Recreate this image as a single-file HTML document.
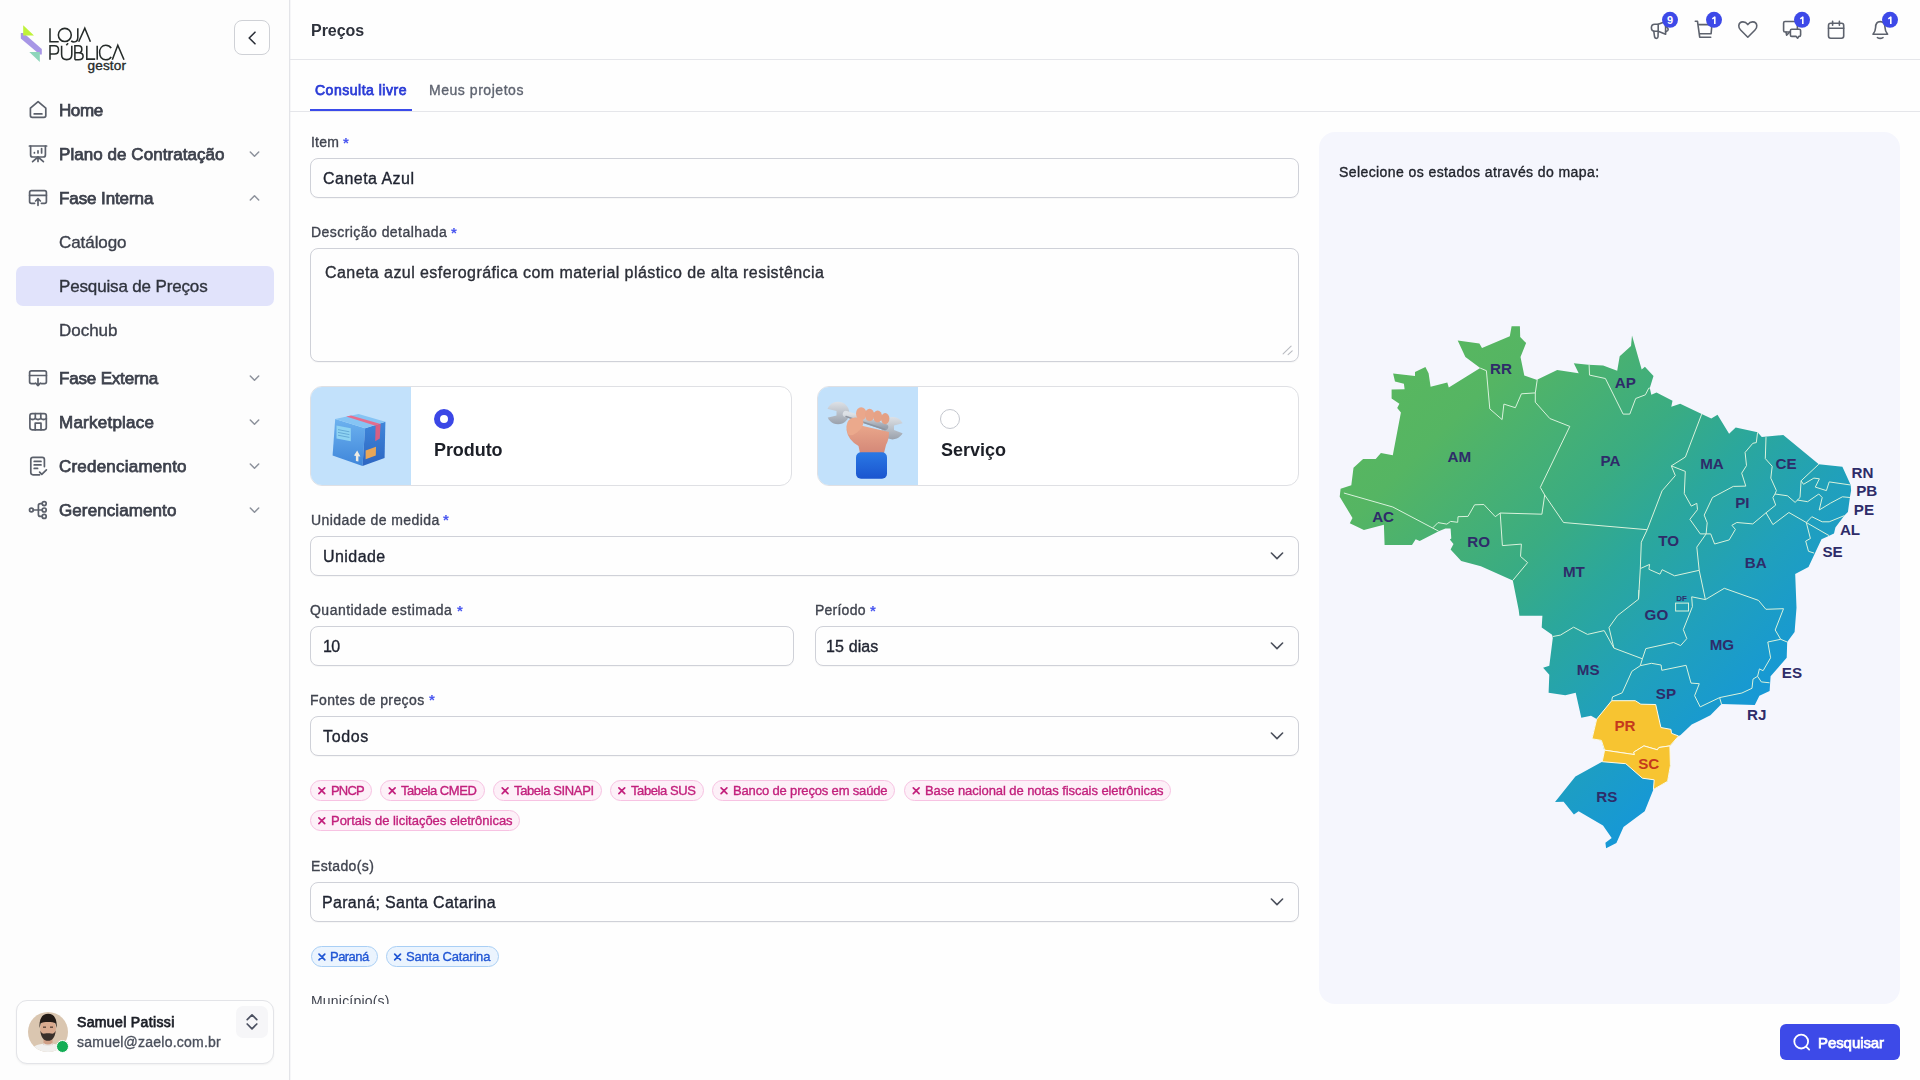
<!DOCTYPE html>
<html lang="pt-BR"><head><meta charset="utf-8"><title>Preços</title>
<style>
*{box-sizing:border-box;margin:0;padding:0}
html,body{width:1920px;height:1080px;overflow:hidden;background:#fefefe;font-family:"Liberation Sans",sans-serif}
.abs{position:absolute}
.t{position:absolute;white-space:pre;line-height:1;font-family:"Liberation Sans",sans-serif;will-change:transform}
.sb{position:absolute;left:0;top:0;width:290px;height:1080px;background:#fdfdfd;border-right:1px solid #e3e4e8;box-shadow:1px 0 0 #f6f6f8}
.inp{position:absolute;background:#fefefe;border:1px solid #cfd1d8;border-radius:8px;box-shadow:0 1px 1px rgba(0,0,0,0.03)}
.card{position:absolute;background:#fff;border:1px solid #dfe0e4;border-radius:12px;overflow:hidden}
.chip{position:absolute;height:21px;border-radius:11px}
.chip.pk{background:#fdf0f8;border:1px solid #f7c2e2}
.chip.bl{background:#ebf4fe;border:1px solid #a9cff5}
.chip .x{position:absolute;left:6px;top:2px;font:700 13px/16px "Liberation Sans",sans-serif}
.chip.pk .x{color:#c2207c}
.chip.bl .x{color:#2156d4}
.ml{font:700 15.2px "Liberation Sans",sans-serif;fill:#2e2c69}
</style></head><body>
<!-- sidebar -->
<div class="sb"></div>
<div class="abs" style="left:16px;top:266px;width:258px;height:40px;background:#e1e3fb;border-radius:7px"></div>
<div class="abs" style="left:234px;top:20px;width:36px;height:35px;border:1px solid #cfd1d6;border-radius:8px;background:#fefefe"></div>
<div class="abs" style="left:16px;top:1000px;width:258px;height:64px;border:1px solid #e3e4e8;border-radius:11px;background:#fefefe;box-shadow:0 1px 2px rgba(0,0,0,0.05)"></div>
<div class="abs" style="left:236px;top:1006px;width:32px;height:32px;border-radius:7px;background:#f6f6f8"></div>
<!-- avatar -->
<svg class="abs" style="left:28px;top:1012px" width="40" height="40" viewBox="0 0 40 40">
<defs><clipPath id="av"><circle cx="20" cy="20" r="20"/></clipPath></defs>
<g clip-path="url(#av)">
<rect width="40" height="40" fill="#dac6b0"/>
<path d="M2 40 C4 33.5 11 31.5 20 31.5 C29 31.5 36 33.5 38 40 Z" fill="#f0efed"/>
<rect x="15.5" y="24" width="9" height="9" fill="#cf9f86"/>
<path d="M15.5 31 Q20 34 24.5 31 L24.5 33 Q20 35 15.5 33 Z" fill="#e4e2df"/>
<ellipse cx="20" cy="16.8" rx="7.9" ry="10.4" fill="#d9aa8f"/>
<path d="M11.6 16 C10.8 6.2 14.6 1.8 20.2 1.8 C25.6 1.8 29.4 6.2 28.6 16 L27.6 11.5 C25 9.6 15.4 9.6 12.6 11.5 Z" fill="#231b17"/>
<path d="M12.4 18.5 C12.6 25.5 16 28.8 20 28.8 C24 28.8 27.4 25.5 27.6 18.5 C26.6 21.4 25 22 23 21.6 C21.5 21.2 18.5 21.2 17 21.6 C15 22 13.4 21.4 12.4 18.5 Z" fill="#3a302b"/>
<rect x="15" y="14.6" width="3" height="1.1" fill="#3a2a22"/><rect x="22" y="14.6" width="3" height="1.1" fill="#3a2a22"/>
</g>
</svg>
<div class="abs" style="left:56.3px;top:1040.3px;width:13px;height:13px;border-radius:50%;background:#13ad55;border:1.4px solid #fff"></div>
<!-- logo -->
<svg class="abs" style="left:0;top:0" width="140" height="80" viewBox="0 0 140 80">
<polygon points="20.8,32.9 23.5,32.9 41.8,48.9 41.8,54.6 39.8,54.6 20.8,38.4" fill="#a796e6"/>
<polygon points="23.2,25.2 23.2,35.6 34,35.6" fill="#bff23a"/>
<polygon points="29.3,52.1 39.8,52.1 39.8,62.1" fill="#8ed6bb"/>
<g fill="none" stroke="#252b29" stroke-width="1.55" stroke-linecap="butt" stroke-linejoin="miter">
<path d="M50 28.2 V41.7 H58.7"/>
<ellipse cx="64.8" cy="34.95" rx="6.45" ry="6.6"/>
<path d="M77.8 28.2 V37.5 C77.8 40.3 76.2 41.9 73.9 41.9 C72.7 41.9 71.8 41.5 71.2 40.9"/>
<path d="M78.7 41.7 L84.8 28.3 L90.4 41.7"/>
<path d="M50 59.7 V45.8 H54.5 C57.3 45.8 58.5 47.6 58.5 49.9 C58.5 52.2 57.3 54 54.5 54 H50"/>
<path d="M61.6 45.8 V54.5 C61.6 58 63.7 59.6 66.7 59.6 C69.7 59.6 71.8 58 71.8 54.5 V45.8"/>
<path d="M66.3 45.3 L68.1 43.3"/>
<path d="M74.9 59.7 V45.8 H78.6 C80.9 45.8 81.8 47.2 81.8 49.2 C81.8 51.2 80.8 52.8 78.6 52.8 H74.9 M78.6 52.8 C81.6 52.8 83.1 54.3 83.1 56.2 C83.1 58.3 81.6 59.7 78.6 59.7 H74.9"/>
<path d="M86.8 45.8 V59.1 H95.2"/>
<path d="M97.2 45.8 V59.7"/>
<path d="M111.2 48.2 C110 46.3 108 45.3 105.8 45.3 C102 45.3 99.6 48.5 99.6 52.6 C99.6 56.7 102 59.8 105.8 59.8 C108 59.8 110 58.8 111.2 56.8"/>
<path d="M112.3 59.7 L117.8 45.3 L124 59.7"/>
</g>
<text x="87.5" y="69.7" style="font:400 13.6px 'Liberation Sans';fill:#252b29;letter-spacing:0.15px;stroke:#252b29;stroke-width:0.35">gestor</text>
</svg>
<!-- collapse chevron -->
<svg class="abs" style="left:0;top:0" width="290" height="560" viewBox="0 0 290 560">
<path d="M255 32.2 L249.2 38 L255 43.8" fill="none" stroke="#2b2f38" stroke-width="1.6" stroke-linecap="round" stroke-linejoin="round"/>
<g fill="none" stroke="#5b606b" stroke-width="1.7" stroke-linecap="round" stroke-linejoin="round">
<!-- home -->
<path d="M30.4 108.2 L38.1 101.6 L45.8 108.2 V115.6 Q45.8 117.4 44 117.4 H32.2 Q30.4 117.4 30.4 115.6 Z"/>
<path d="M34.2 113.9 H41.9"/>
<!-- plano -->
<path d="M29.4 146 H46.6"/>
<path d="M30.6 146 V155 Q30.6 157 32.6 157 H43.4 Q45.4 157 45.4 155 V146"/>
<path d="M34.4 153 V152.6 M38 153 V150.8 M41.6 153 V148.6"/>
<path d="M38 157 V161.5 M38 157 L32.6 161.6 M38 157 L43.4 161.6"/>
<!-- fase interna -->
<path d="M34.6 203.3 H31.4 Q29.6 203.3 29.6 201.5 V192.4 Q29.6 190.6 31.4 190.6 H44.6 Q46.4 190.6 46.4 192.4 V201.5 Q46.4 203.3 44.6 203.3 H41.4"/>
<path d="M29.6 195.3 H46.4"/>
<path d="M38 205.3 V198.6 M35.6 201 L38 198.6 L40.4 201"/>
<!-- fase externa -->
<path d="M34.6 383.6 H31.4 Q29.6 383.6 29.6 381.8 V372.6 Q29.6 370.8 31.4 370.8 H44.6 Q46.4 370.8 46.4 372.6 V381.8 Q46.4 383.6 44.6 383.6 H41.4"/>
<path d="M29.6 375.5 H46.4"/>
<path d="M38 378.6 V385.6 M35.6 383.2 L38 385.6 L40.4 383.2"/>
<!-- marketplace -->
<rect x="29.9" y="413.6" width="16.4" height="16.2" rx="2.2"/>
<path d="M29.9 418.4 Q32.6 420.6 35.3 418.4 Q38 420.6 40.8 418.4 Q43.5 420.6 46.3 418.4"/>
<path d="M35.3 413.6 V418.4 M40.8 413.6 V418.4"/>
<path d="M35.2 429.8 V423.2 H41 V429.8"/>
<!-- credenciamento -->
<path d="M39.6 474.8 H33 Q30.8 474.8 30.8 472.6 V459.6 Q30.8 457.4 33 457.4 H42.2 Q44.4 457.4 44.4 459.6 V466.6"/>
<path d="M34.2 461.4 H41 M34.2 464.9 H41 M34.2 468.4 H37.6"/>
<path d="M39.6 472.2 L41.8 474.4 L46.4 469.8"/>
<!-- gerenciamento -->
<circle cx="31.4" cy="510" r="1.9"/>
<path d="M33.3 510 H41.8"/>
<path d="M42 503.6 H40.4 Q38.4 503.6 38.4 505.6 V514.4 Q38.4 516.4 40.4 516.4 H42"/>
<circle cx="44.2" cy="503.6" r="2"/><circle cx="44.2" cy="510" r="2"/><circle cx="44.2" cy="516.4" r="2"/>
</g>
<g fill="none" stroke="#8d929c" stroke-width="1.5" stroke-linecap="round" stroke-linejoin="round">
<path d="M250.3 152 L254.5 156.2 L258.7 152"/>
<path d="M250.3 200 L254.5 195.8 L258.7 200"/>
<path d="M250.3 376 L254.5 380.2 L258.7 376"/>
<path d="M250.3 420 L254.5 424.2 L258.7 420"/>
<path d="M250.3 464 L254.5 468.2 L258.7 464"/>
<path d="M250.3 508 L254.5 512.2 L258.7 508"/>
</g>
</svg>
<svg class="abs" style="left:230px;top:1000px" width="50" height="50" viewBox="230 1000 50 50">
<path d="M247.2 1019.6 L252 1014.8 L256.8 1019.6 M247.2 1024 L252 1028.8 L256.8 1024" fill="none" stroke="#4b5060" stroke-width="1.7" stroke-linecap="round" stroke-linejoin="round"/>
</svg>
<!-- header -->
<div class="abs" style="left:290px;top:59px;width:1630px;height:1px;background:#e5e6ea"></div>
<div class="abs" style="left:290px;top:111px;width:1630px;height:1px;background:#e5e6ea"></div>
<div class="abs" style="left:310px;top:109px;width:102px;height:2px;background:#3b4bea"></div>
<svg class="abs" style="left:1630px;top:0" width="290" height="60" viewBox="1630 0 290 60">
<g fill="none" stroke="#5d626d" stroke-width="1.6" stroke-linecap="round" stroke-linejoin="round">
<!-- megaphone -->
<path d="M1658.2 24.3 H1654.8 Q1651.4 24.3 1651.4 27.8 Q1651.4 31.3 1654.8 31.3 H1658.2 L1665.6 34.2 V21.4 Z"/>
<path d="M1658.2 24.3 V31.3"/>
<path d="M1653.8 31.3 L1654.6 37 Q1655 38.4 1656.4 38.4 Q1657.8 38.4 1658 37 L1658.2 31.3"/>
<path d="M1665.6 26.4 Q1669.4 28.6 1667.6 30.6 L1665.6 31.8"/>
<!-- cart -->
<path d="M1695.3 21.3 H1697.5 L1699.7 37.2 H1710.7"/>
<path d="M1698.8 24.6 H1711.9 L1711.1 33.8 H1700"/>
<!-- heart -->
<path d="M1747.8 37.2 L1740.6 30 Q1738.6 28 1738.8 25.6 Q1739.2 22 1742.8 21.9 Q1745.8 21.8 1747.8 24.6 Q1749.8 21.8 1752.8 21.9 Q1756.4 22 1756.8 25.6 Q1757 28 1755 30 Z"/>
<!-- chat -->
<path d="M1790.2 32 H1785 Q1783.6 32 1783.6 30.6 V22.9 Q1783.6 21.5 1785 21.5 H1796 Q1797.4 21.5 1797.4 22.9 V29.2"/>
<path d="M1786 32 L1786.6 35.2 L1789.8 32"/>
<path d="M1791.8 29.2 H1799.2 Q1800.6 29.2 1800.6 30.6 V35 Q1800.6 36.4 1799.2 36.4 H1798.8 L1797.6 38.2 L1796.2 36.4 H1791.8 Q1790.4 36.4 1790.4 35 V30.6 Q1790.4 29.2 1791.8 29.2 Z"/>
<!-- calendar -->
<rect x="1828.5" y="23.2" width="15.2" height="15" rx="2.2"/>
<path d="M1828.5 28.2 H1843.7 M1832.6 21.2 V25.2 M1839.4 21.2 V25.2"/>
<!-- bell -->
<path d="M1873 34.2 H1887.6 Q1885 31 1885 27.6 Q1885 21.6 1880.2 21.6 Q1875.6 21.6 1875.6 27.6 Q1875.6 31 1873 34.2 Z"/>
<path d="M1877.4 37.6 Q1880.2 39.2 1883 37.6"/>
</g>
<g fill="#3d49e8">
<circle cx="1670" cy="19.8" r="8"/><circle cx="1714" cy="19.8" r="8"/><circle cx="1802" cy="19.8" r="8"/><circle cx="1890" cy="19.8" r="8"/>
</g>
<g fill="none" stroke="#fff" stroke-width="1.6" stroke-linejoin="round">
<path d="M1712.3 18.9 L1714.8 17.1 V23.9"/><path d="M1800.3 18.9 L1802.8 17.1 V23.9"/><path d="M1888.3 18.9 L1890.8 17.1 V23.9"/>
</g>
<g style="font:700 11px 'Liberation Sans';fill:#fff" text-anchor="middle">
<text x="1670.1" y="23.9">9</text>
</g>
</svg>
<!-- form inputs -->
<div class="inp" style="left:310px;top:158px;width:989px;height:40px"></div>
<div class="inp" style="left:310px;top:248px;width:989px;height:114px"></div>
<svg class="abs" style="left:1280px;top:343px" width="16" height="16" viewBox="0 0 16 16"><path d="M3.1 10.9 L11.1 3.1 M8.1 11.7 L12.2 7.8" stroke="#b9bbc1" stroke-width="1.1" stroke-linecap="round" fill="none"/></svg>
<div class="card" style="left:310px;top:386px;width:482px;height:100px"><div class="abs" style="left:0;top:0;width:100px;height:100px;background:#c2e1fb"></div></div>
<div class="card" style="left:817px;top:386px;width:482px;height:100px"><div class="abs" style="left:0;top:0;width:100px;height:100px;background:#c2e1fb"></div></div>
<div class="abs" style="left:434px;top:409px;width:20px;height:20px;border-radius:50%;border:6px solid #3b47e6;background:#fff"></div>
<div class="abs" style="left:940.3px;top:409px;width:20px;height:20px;border-radius:50%;border:1px solid #c4c7ce;background:#fff"></div>
<!-- box image -->
<svg class="abs" style="left:325px;top:405px" width="70" height="70" viewBox="325 405 70 70">
<defs>
<linearGradient id="bx1" x1="0" y1="0" x2="0" y2="1"><stop offset="0" stop-color="#6db2ef"/><stop offset="1" stop-color="#3f86da"/></linearGradient>
<linearGradient id="bx2" x1="0" y1="0" x2="0" y2="1"><stop offset="0" stop-color="#3f86da"/><stop offset="1" stop-color="#2d66c2"/></linearGradient>
</defs>
<polygon points="335.2,419 365.1,428.2 362.5,465.9 332.6,455.5" fill="url(#bx1)"/>
<polygon points="365.1,428.2 385.4,421.7 384.6,458.1 362.5,465.9" fill="url(#bx2)"/>
<polygon points="335.2,419 358.6,413.9 385.4,421.7 365.1,428.2" fill="#86c4f4"/>
<polygon points="346.2,416.6 351,415.5 380.6,424.1 375.6,425.7" fill="#e56d8e"/>
<polygon points="375.6,425.7 380.6,424.1 379.8,438.6 375.2,441.2" fill="#d75f85"/>
<polygon points="336.5,425.6 350.8,428.2 350.8,441.2 336.5,438.6" fill="#8ed3f2"/>
<path d="M338 429.6 L349.4 431.8 M338 432.4 L349.4 434.6 M338 435.2 L349.4 437.4" stroke="#5aa0cf" stroke-width="0.8"/>
<polygon points="354,455.6 357.2,450.6 360.4,456.6 358.4,456.3 358.4,461.6 355.9,461 355.9,455.9" fill="#eeebe3"/>
<polygon points="365.6,450.6 376,446.8 375.8,455.6 365.6,459.2" fill="#e9a657"/>
</svg>
<!-- wrench hand image -->
<svg class="abs" style="left:817px;top:387px" width="99" height="98" viewBox="817 387 99 98">
<defs>
<linearGradient id="wr" x1="0" y1="0" x2="0" y2="1"><stop offset="0" stop-color="#dde1e6"/><stop offset="1" stop-color="#9aa1ac"/></linearGradient>
<linearGradient id="sk" x1="0" y1="0" x2="0" y2="1"><stop offset="0" stop-color="#eba98c"/><stop offset="1" stop-color="#d48878"/></linearGradient>
<linearGradient id="sl" x1="0" y1="0" x2="0" y2="1"><stop offset="0" stop-color="#2a78e4"/><stop offset="1" stop-color="#1a55cf"/></linearGradient>
</defs>
<circle cx="838" cy="413" r="11.2" fill="url(#wr)"/>
<polygon points="822,407.5 836.5,411 836.5,415.5 822,419" fill="#c2e1fb"/>
<circle cx="892.5" cy="428.2" r="11.2" fill="url(#wr)"/>
<polygon points="907,422 894,425.5 894,430 907,435" fill="#c2e1fb"/>
<path d="M846.5 430 Q846 424 850 423 L889 432 Q889 440 886 445 L884 453 L860 453 L858.5 446 Q848 440 846.5 430 Z" fill="url(#sk)"/>
<path d="M846 414 L885 427" stroke="url(#wr)" stroke-width="6.5" stroke-linecap="round"/>
<path d="M846 416.5 L885 429.5" stroke="#8e95a0" stroke-width="1.4" stroke-linecap="round"/>
<ellipse cx="861.2" cy="413.6" rx="5.2" ry="6.4" fill="#eaa78b"/>
<ellipse cx="869.6" cy="415" rx="4.6" ry="6.2" fill="#e8a488"/>
<ellipse cx="877.6" cy="416.6" rx="4.5" ry="6" fill="#e6a286"/>
<ellipse cx="885.2" cy="418.6" rx="4.2" ry="5.6" fill="#e4a084"/>
<path d="M846.5 426 Q847 418 855 417.5 Q863 417 863.5 422 Q863 428 857 432.5 Q851 437 848 434 Z" fill="#eba98c"/>
<rect x="856" y="452.3" width="31" height="26.4" rx="5" fill="url(#sl)"/>
</svg>
<!-- selects -->
<div class="inp" style="left:310px;top:536px;width:989px;height:40px"></div>
<div class="inp" style="left:310px;top:626px;width:484px;height:40px"></div>
<div class="inp" style="left:815px;top:626px;width:484px;height:40px"></div>
<div class="inp" style="left:310px;top:716px;width:989px;height:40px"></div>
<div class="inp" style="left:310px;top:882px;width:989px;height:40px"></div>
<svg class="abs" style="left:1260px;top:540px" width="40" height="380" viewBox="1260 540 40 380">
<g fill="none" stroke="#4a4f5b" stroke-width="1.6" stroke-linecap="round" stroke-linejoin="round">
<path d="M1271.4 553 L1277 558.6 L1282.6 553"/>
<path d="M1271.4 643 L1277 648.6 L1282.6 643"/>
<path d="M1271.4 733 L1277 738.6 L1282.6 733"/>
<path d="M1271.4 899 L1277 904.6 L1282.6 899"/>
</g></svg>
<!-- map panel -->
<div class="abs" style="left:1319px;top:132px;width:581px;height:872px;background:#f5f6fd;border-radius:16px"></div>
<svg class="abs" style="left:0;top:0" width="1920" height="1080" viewBox="0 0 1920 1080">
<defs><linearGradient id="g" gradientUnits="userSpaceOnUse" x1="1340" y1="326" x2="1851" y2="848"><stop offset="0" stop-color="#5cb95b"/><stop offset="0.2" stop-color="#55b563"/><stop offset="0.4" stop-color="#3aac82"/><stop offset="0.5" stop-color="#2ba79c"/><stop offset="0.63" stop-color="#20a0bc"/><stop offset="0.77" stop-color="#1698d6"/><stop offset="1" stop-color="#1394e0"/></linearGradient></defs>
<polygon points="1339.7,496.7 1340.6,488.8 1351.3,485.3 1353.5,467.8 1363.1,458.9 1375.7,458.9 1380.9,453.0 1392.8,455.2 1400.9,412.6 1397.2,408.1 1399.4,403.7 1391.6,398.5 1391.6,389.6 1404.6,389.3 1403.9,383.7 1395.0,381.5 1393.1,373.6 1415.0,376.0 1415.0,371.9 1425.4,367.1 1428.6,373.3 1430.6,386.7 1447.3,382.5 1448.8,387.4 1480.2,368.1 1465.4,357.0 1457.7,340.4 1479.4,343.4 1482.0,347.9 1509.8,336.3 1511.6,326.2 1519.9,326.2 1520.2,337.0 1526.1,343.0 1520.5,357.0 1524.3,375.6 1537.2,380.0 1538.0,379.3 1557.2,370.1 1578.7,373.3 1573.8,363.3 1588.3,364.7 1603.1,365.6 1617.2,370.7 1619.7,356.3 1631.0,345.9 1632.0,335.6 1641.7,369.6 1644.9,366.7 1653.5,376.0 1649.8,388.1 1651.3,394.8 1656.5,392.6 1672.5,400.7 1671.3,406.7 1680.2,403.7 1701.7,414.1 1711.3,418.5 1717.5,414.8 1729.1,433.8 1735.7,427.4 1757.6,432.2 1761.8,437.1 1783.3,435.0 1818.8,464.2 1842.4,466.7 1850.7,485.0 1851.1,490.6 1850.0,496.8 1847.9,512.1 1844.4,515.6 1835.4,527.4 1834.0,533.6 1829.2,535.7 1821.5,539.2 1808.5,567.0 1795.2,574.1 1796.5,607.8 1794.6,631.9 1787.2,642.0 1786.7,657.8 1770.6,676.3 1769.6,691.1 1759.4,695.7 1754.8,705.0 1721.5,704.1 1710.4,715.2 1700.0,720.6 1691.7,724.4 1680.6,735.1 1678.6,736.0 1669.9,745.9 1669.1,747.0 1670.4,765.6 1667.6,781.3 1653.4,789.5 1644.7,811.3 1623.5,827.0 1616.4,843.1 1606.1,848.3 1605.4,842.8 1611.7,838.0 1603.0,825.4 1578.6,811.3 1573.9,814.4 1563.6,801.8 1555.0,802.1 1575.4,776.6 1602.2,761.7 1604.6,751.4 1601.4,740.4 1592.0,738.8 1596.7,719.1 1591.0,715.7 1581.3,717.8 1575.7,692.8 1565.3,695.3 1548.6,692.8 1549.3,674.7 1543.1,667.8 1549.3,665.7 1552.8,637.9 1552.1,634.7 1541.7,627.5 1542.4,615.7 1519.4,615.7 1518.7,610.0 1512.8,580.4 1480.9,566.3 1461.2,561.1 1450.6,549.6 1453.5,544.1 1449.8,539.6 1451.3,538.6 1450.6,528.5 1445.4,528.5 1438.7,531.2 1419.7,541.1 1415.7,539.3 1412.0,545.1 1384.6,545.1 1383.9,524.8 1363.9,530.0 1349.8,523.3 1352.5,517.9" fill="url(#g)"/>
<polyline points="1343.9,493.0 1392.8,507.0 1438.7,531.2" fill="none" stroke="#d9f2dc" stroke-width="1" stroke-linejoin="round"/>
<polyline points="1432.8,527.8 1438.0,522.6 1446.9,524.1 1450.6,521.4 1457.7,522.3 1458.0,516.7 1468.0,516.4 1474.6,504.8 1483.9,504.5 1495.3,516.7 1500.2,513.0" fill="none" stroke="#d9f2dc" stroke-width="1" stroke-linejoin="round"/>
<polyline points="1500.2,513.0 1541.9,514.2 1544.7,495.0" fill="none" stroke="#d9f2dc" stroke-width="1" stroke-linejoin="round"/>
<polyline points="1500.2,513.0 1502.4,545.6 1521.4,544.1 1520.5,556.4 1527.6,562.6 1512.8,580.4" fill="none" stroke="#d9f2dc" stroke-width="1" stroke-linejoin="round"/>
<polyline points="1480.2,368.1 1486.4,370.7 1489.8,408.9 1502.1,419.6 1503.9,404.1 1515.4,407.7 1521.4,393.8 1535.3,392.9 1537.2,380.0" fill="none" stroke="#d9f2dc" stroke-width="1" stroke-linejoin="round"/>
<polyline points="1535.3,392.9 1535.3,402.2 1549.8,418.5 1569.8,426.4 1540.3,487.4 1544.7,495.0 1563.5,522.5 1647.2,529.7" fill="none" stroke="#d9f2dc" stroke-width="1" stroke-linejoin="round"/>
<polyline points="1589.1,364.7 1589.5,375.1 1605.4,378.5 1623.1,414.1 1629.8,414.1 1635.7,398.5 1645.4,394.8 1648.8,388.1 1649.8,388.1" fill="none" stroke="#d9f2dc" stroke-width="1" stroke-linejoin="round"/>
<polyline points="1701.7,414.1 1685.4,457.0 1671.3,465.9 1675.3,475.6 1662.1,490.8 1647.2,529.7" fill="none" stroke="#d9f2dc" stroke-width="1" stroke-linejoin="round"/>
<polyline points="1671.3,465.9 1685.3,471.4 1684.3,493.6 1691.3,506.1 1696.8,503.3 1697.5,509.6 1689.9,519.3 1700.3,533.9 1706.1,533.9" fill="none" stroke="#d9f2dc" stroke-width="1" stroke-linejoin="round"/>
<polyline points="1647.2,529.7 1641.3,542.2 1640.3,568.6 1638.5,599.2 1617.4,615.7 1609.0,627.5 1613.9,648.1 1642.4,658.8" fill="none" stroke="#d9f2dc" stroke-width="1" stroke-linejoin="round"/>
<polyline points="1640.3,568.6 1649.6,564.4 1648.9,569.3 1660.0,574.2 1662.1,569.7 1674.6,575.8 1699.2,570.3" fill="none" stroke="#d9f2dc" stroke-width="1" stroke-linejoin="round"/>
<polyline points="1699.2,570.3 1696.8,547.1 1706.1,533.9" fill="none" stroke="#d9f2dc" stroke-width="1" stroke-linejoin="round"/>
<polyline points="1757.6,432.2 1756.3,442.6 1752.8,443.3 1745.1,452.4 1746.5,465.6 1741.7,473.2 1745.8,486.1 1733.3,486.4 1712.5,497.5 1704.2,515.1 1707.2,522.8 1706.1,533.9" fill="none" stroke="#d9f2dc" stroke-width="1" stroke-linejoin="round"/>
<polyline points="1706.1,533.9 1710.7,533.9 1714.6,544.0 1729.2,539.9 1735.4,529.4 1731.9,525.3 1736.8,522.5 1752.8,523.9 1766.0,512.8 1775.7,505.1 1772.9,497.5 1775.0,494.0" fill="none" stroke="#d9f2dc" stroke-width="1" stroke-linejoin="round"/>
<polyline points="1766.0,437.1 1765.3,458.6 1772.2,466.3 1770.8,478.1 1776.4,490.6 1775.0,494.0 1787.5,495.8 1795.1,502.4 1800.0,497.5 1801.1,480.8 1818.8,464.2" fill="none" stroke="#d9f2dc" stroke-width="1" stroke-linejoin="round"/>
<polyline points="1801.1,480.8 1803.5,484.3 1813.9,478.1 1819.4,478.8 1815.3,487.1 1826.4,490.6 1829.2,481.9 1850.7,485.0" fill="none" stroke="#d9f2dc" stroke-width="1" stroke-linejoin="round"/>
<polyline points="1797.2,500.0 1807.6,501.7 1818.8,494.0 1822.2,497.5 1819.2,510.0 1830.6,503.1 1842.4,496.8 1850.0,497.5" fill="none" stroke="#d9f2dc" stroke-width="1" stroke-linejoin="round"/>
<polyline points="1766.0,512.8 1772.9,524.6 1788.9,512.5 1806.3,522.5 1829.2,535.7" fill="none" stroke="#d9f2dc" stroke-width="1" stroke-linejoin="round"/>
<polyline points="1806.3,522.5 1811.8,516.7 1822.2,521.8 1829.2,521.8 1844.4,515.6" fill="none" stroke="#d9f2dc" stroke-width="1" stroke-linejoin="round"/>
<polyline points="1806.3,522.5 1810.4,538.5 1805.7,541.1 1808.5,551.3 1814.1,553.1" fill="none" stroke="#d9f2dc" stroke-width="1" stroke-linejoin="round"/>
<polyline points="1705.4,599.6 1724.3,588.3 1758.5,600.4 1765.9,609.3 1783.5,608.7 1775.2,630.0 1780.7,639.3 1787.2,642.0" fill="none" stroke="#d9f2dc" stroke-width="1" stroke-linejoin="round"/>
<polyline points="1699.2,570.3 1705.4,599.6 1691.7,596.8 1692.4,606.7 1683.3,629.6 1686.8,638.6 1680.6,645.6 1673.6,642.5 1645.8,648.6 1642.4,658.8 1640.3,665.7 1631.9,671.3 1622.2,692.8 1612.5,696.9 1611.7,700.7" fill="none" stroke="#d9f2dc" stroke-width="1" stroke-linejoin="round"/>
<polyline points="1552.8,636.5 1560.4,635.1 1573.6,627.2 1587.5,634.4 1604.2,630.6 1613.9,648.1" fill="none" stroke="#d9f2dc" stroke-width="1" stroke-linejoin="round"/>
<polyline points="1640.3,665.7 1651.4,663.3 1661.1,665.0 1661.8,670.3 1686.1,665.3 1691.0,683.1 1699.3,683.7 1694.6,695.7 1700.2,706.9 1719.6,697.6 1741.9,693.0 1752.0,688.3 1753.0,679.1 1757.6,676.3" fill="none" stroke="#d9f2dc" stroke-width="1" stroke-linejoin="round"/>
<polyline points="1719.6,697.6 1721.5,704.1" fill="none" stroke="#d9f2dc" stroke-width="1" stroke-linejoin="round"/>
<polyline points="1780.7,639.3 1767.8,642.0 1770.6,657.8 1763.1,670.7 1759.4,668.9 1757.6,676.3 1761.3,681.9 1769.6,682.8" fill="none" stroke="#d9f2dc" stroke-width="1" stroke-linejoin="round"/>
<polyline points="1638.9,590.0 1638.5,599.2" fill="none" stroke="#d9f2dc" stroke-width="1" stroke-linejoin="round"/>
<rect x="1675.6" y="603.1" width="12.9" height="7.9" fill="none" stroke="#d9f2dc" stroke-width="1"/>
<polygon points="1611.7,700.7 1635.3,700.7 1640.8,704.2 1655.7,704.5 1660.9,727.5 1671.0,729.4 1671.5,733.3 1678.6,736.0 1669.9,745.9 1658.9,747.5 1657.3,749.8 1643.9,745.9 1633.7,752.2 1634.5,754.6 1604.6,750.2 1601.4,740.4 1592.0,738.8 1596.7,719.1" fill="#f7c431" stroke="#fffbe8" stroke-width="1"/>
<polygon points="1604.6,750.2 1634.5,754.6 1633.7,752.2 1643.9,745.9 1657.3,749.8 1658.9,747.5 1669.9,745.9 1670.4,765.6 1667.6,781.3 1653.4,789.5 1654.2,779.8 1642.4,778.2 1625.8,763.7 1602.2,761.7" fill="#f7c431" stroke="#fffbe8" stroke-width="1"/>
<text x="1500.9" y="373.8" text-anchor="middle" class="ml">RR</text>
<text x="1625.4" y="387.7" text-anchor="middle" class="ml">AP</text>
<text x="1459.4" y="461.5" text-anchor="middle" class="ml">AM</text>
<text x="1610.6" y="465.59999999999997" text-anchor="middle" class="ml">PA</text>
<text x="1712" y="468.9" text-anchor="middle" class="ml">MA</text>
<text x="1786.1" y="469.4" text-anchor="middle" class="ml">CE</text>
<text x="1862.5" y="477.7" text-anchor="middle" class="ml">RN</text>
<text x="1866.7" y="495.8" text-anchor="middle" class="ml">PB</text>
<text x="1863.9" y="514.5" text-anchor="middle" class="ml">PE</text>
<text x="1850" y="534.6" text-anchor="middle" class="ml">AL</text>
<text x="1832.6" y="557.0" text-anchor="middle" class="ml">SE</text>
<text x="1742.4" y="508.0" text-anchor="middle" class="ml">PI</text>
<text x="1383.1" y="521.9000000000001" text-anchor="middle" class="ml">AC</text>
<text x="1478.7" y="547.1" text-anchor="middle" class="ml">RO</text>
<text x="1668.6" y="546.0" text-anchor="middle" class="ml">TO</text>
<text x="1573.9" y="576.9000000000001" text-anchor="middle" class="ml">MT</text>
<text x="1755.7" y="568.2" text-anchor="middle" class="ml">BA</text>
<text x="1656.4" y="619.7" text-anchor="middle" class="ml">GO</text>
<text x="1588.2" y="675.1" text-anchor="middle" class="ml">MS</text>
<text x="1606.9" y="801.5" text-anchor="middle" class="ml">RS</text>
<text x="1721.9" y="649.6" text-anchor="middle" class="ml">MG</text>
<text x="1666" y="698.7" text-anchor="middle" class="ml">SP</text>
<text x="1791.9" y="677.8000000000001" text-anchor="middle" class="ml">ES</text>
<text x="1756.7" y="720.4000000000001" text-anchor="middle" class="ml">RJ</text>
<text x="1625" y="731.4000000000001" text-anchor="middle" class="ml" style="fill:#c53a1c">PR</text>
<text x="1648.7" y="768.9000000000001" text-anchor="middle" class="ml" style="fill:#c53a1c">SC</text>
<text x="1681.5" y="600.5" text-anchor="middle" style="font:700 8px 'Liberation Sans';fill:#2e2d6b">DF</text>
</svg>
<!-- clipped label Municipio -->
<div class="abs" style="left:300px;top:985px;width:200px;height:19px;overflow:hidden"><div class="t" style="left:10.5px;top:8.6px;font-size:14px;color:#40444f;letter-spacing:0.2px">Município(s)</div>
</div>
<!-- button -->
<div class="abs" style="left:1780px;top:1024px;width:120px;height:36px;background:#3d4ae8;border-radius:6px"></div>
<svg class="abs" style="left:1790px;top:1030px" width="24" height="24" viewBox="1790 1030 24 24">
<circle cx="1801.2" cy="1041.6" r="6.9" fill="none" stroke="#fff" stroke-width="1.8"/>
<path d="M1806.2 1046.6 L1809.2 1049.6" stroke="#fff" stroke-width="1.8" stroke-linecap="round"/>
</svg>
<div class="chip pk" style="left:310px;top:780px;width:61.5px"></div>
<div class="chip pk" style="left:380.4px;top:780px;width:104.30000000000001px"></div>
<div class="chip pk" style="left:493.3px;top:780px;width:108.30000000000001px"></div>
<div class="chip pk" style="left:610px;top:780px;width:93.60000000000002px"></div>
<div class="chip pk" style="left:712.2px;top:780px;width:183.0999999999999px"></div>
<div class="chip pk" style="left:904.4px;top:780px;width:267.0000000000001px"></div>
<div class="chip pk" style="left:310px;top:810px;width:210.29999999999995px"></div>
<div class="chip bl" style="left:310.5px;top:946px;width:67px"></div>
<div class="chip bl" style="left:386px;top:946px;width:113px"></div>
<svg class="abs" style="left:0;top:0" width="1920" height="1080" viewBox="0 0 1920 1080"><path d="M318.9 787.8 L324.7 793.6 M324.7 787.8 L318.9 793.6" stroke="#c2207c" stroke-width="1.7" stroke-linecap="round"/><path d="M389.3 787.8 L395.1 793.6 M395.1 787.8 L389.3 793.6" stroke="#c2207c" stroke-width="1.7" stroke-linecap="round"/><path d="M502.2 787.8 L508.0 793.6 M508.0 787.8 L502.2 793.6" stroke="#c2207c" stroke-width="1.7" stroke-linecap="round"/><path d="M618.9 787.8 L624.7 793.6 M624.7 787.8 L618.9 793.6" stroke="#c2207c" stroke-width="1.7" stroke-linecap="round"/><path d="M721.1 787.8 L726.9 793.6 M726.9 787.8 L721.1 793.6" stroke="#c2207c" stroke-width="1.7" stroke-linecap="round"/><path d="M913.3 787.8 L919.1 793.6 M919.1 787.8 L913.3 793.6" stroke="#c2207c" stroke-width="1.7" stroke-linecap="round"/><path d="M318.9 817.8 L324.7 823.6 M324.7 817.8 L318.9 823.6" stroke="#c2207c" stroke-width="1.7" stroke-linecap="round"/><path d="M319.0 954.1 L324.8 959.9 M324.8 954.1 L319.0 959.9" stroke="#2156d4" stroke-width="1.7" stroke-linecap="round"/><path d="M394.7 954.1 L400.5 959.9 M400.5 954.1 L394.7 959.9" stroke="#2156d4" stroke-width="1.7" stroke-linecap="round"/></svg>
<div class="t" style="left:58.75px;top:101.86px;font-size:17px;font-weight:400;color:#3d414c;letter-spacing:-0.402px;-webkit-text-stroke:0.75px currentColor;">Home</div>
<div class="t" style="left:58.75px;top:145.61px;font-size:17px;font-weight:400;color:#3d414c;letter-spacing:0.052px;-webkit-text-stroke:0.75px currentColor;">Plano de Contratação</div>
<div class="t" style="left:58.75px;top:189.61px;font-size:17px;font-weight:400;color:#3d414c;letter-spacing:-0.100px;-webkit-text-stroke:0.75px currentColor;">Fase Interna</div>
<div class="t" style="left:58.75px;top:233.61px;font-size:17px;font-weight:400;color:#3d414c;letter-spacing:-0.070px;-webkit-text-stroke:0.35px currentColor;">Catálogo</div>
<div class="t" style="left:58.50px;top:277.61px;font-size:17px;font-weight:400;color:#2f333d;letter-spacing:-0.150px;-webkit-text-stroke:0.35px currentColor;">Pesquisa de Preços</div>
<div class="t" style="left:58.50px;top:321.61px;font-size:17px;font-weight:400;color:#3d414c;letter-spacing:-0.018px;-webkit-text-stroke:0.35px currentColor;">Dochub</div>
<div class="t" style="left:58.50px;top:369.61px;font-size:17px;font-weight:400;color:#3d414c;letter-spacing:-0.176px;-webkit-text-stroke:0.75px currentColor;">Fase Externa</div>
<div class="t" style="left:58.50px;top:413.61px;font-size:17px;font-weight:400;color:#3d414c;letter-spacing:0.240px;-webkit-text-stroke:0.75px currentColor;">Marketplace</div>
<div class="t" style="left:58.50px;top:457.61px;font-size:17px;font-weight:400;color:#3d414c;letter-spacing:0.214px;-webkit-text-stroke:0.75px currentColor;">Credenciamento</div>
<div class="t" style="left:58.50px;top:501.61px;font-size:17px;font-weight:400;color:#3d414c;letter-spacing:0.097px;-webkit-text-stroke:0.75px currentColor;">Gerenciamento</div>
<div class="t" style="left:76.60px;top:1015.05px;font-size:14px;font-weight:400;color:#1c1f27;letter-spacing:0.358px;-webkit-text-stroke:0.75px currentColor;">Samuel Patissi</div>
<div class="t" style="left:76.60px;top:1034.85px;font-size:14px;font-weight:400;color:#4b505c;letter-spacing:0.237px;-webkit-text-stroke:0.35px currentColor;">samuel@zaelo.com.br</div>
<div class="t" style="left:310.70px;top:23.46px;font-size:16px;font-weight:700;color:#2d313b;letter-spacing:-0.046px;">Preços</div>
<div class="t" style="left:314.75px;top:82.90px;font-size:14px;font-weight:400;color:#2a3bd6;letter-spacing:0.512px;-webkit-text-stroke:0.75px currentColor;">Consulta livre</div>
<div class="t" style="left:428.75px;top:82.90px;font-size:14px;font-weight:400;color:#5f6470;letter-spacing:0.543px;-webkit-text-stroke:0.35px currentColor;">Meus projetos</div>
<div class="t" style="left:310.80px;top:135.25px;font-size:14px;font-weight:400;color:#40444f;letter-spacing:0.216px;-webkit-text-stroke:0.35px currentColor;">Item</div>
<div class="t" style="left:342.60px;top:134.70px;font-size:15px;font-weight:700;color:#4b58f0;letter-spacing:0.000px;">*</div>
<div class="t" style="left:310.50px;top:225.15px;font-size:14px;font-weight:400;color:#40444f;letter-spacing:0.450px;-webkit-text-stroke:0.35px currentColor;">Descrição detalhada</div>
<div class="t" style="left:450.50px;top:224.60px;font-size:15px;font-weight:700;color:#4b58f0;letter-spacing:0.000px;">*</div>
<div class="t" style="left:310.70px;top:512.95px;font-size:14px;font-weight:400;color:#40444f;letter-spacing:0.422px;-webkit-text-stroke:0.35px currentColor;">Unidade de medida</div>
<div class="t" style="left:442.50px;top:512.40px;font-size:15px;font-weight:700;color:#4b58f0;letter-spacing:0.000px;">*</div>
<div class="t" style="left:310.20px;top:603.45px;font-size:14px;font-weight:400;color:#40444f;letter-spacing:0.479px;-webkit-text-stroke:0.35px currentColor;">Quantidade estimada</div>
<div class="t" style="left:456.80px;top:602.90px;font-size:15px;font-weight:700;color:#4b58f0;letter-spacing:0.000px;">*</div>
<div class="t" style="left:814.90px;top:603.05px;font-size:14px;font-weight:400;color:#40444f;letter-spacing:0.236px;-webkit-text-stroke:0.35px currentColor;">Período</div>
<div class="t" style="left:869.50px;top:602.50px;font-size:15px;font-weight:700;color:#4b58f0;letter-spacing:0.000px;">*</div>
<div class="t" style="left:310.20px;top:692.95px;font-size:14px;font-weight:400;color:#40444f;letter-spacing:0.402px;-webkit-text-stroke:0.35px currentColor;">Fontes de preços</div>
<div class="t" style="left:429.30px;top:692.40px;font-size:15px;font-weight:700;color:#4b58f0;letter-spacing:0.000px;">*</div>
<div class="t" style="left:310.50px;top:859.35px;font-size:14px;font-weight:400;color:#40444f;letter-spacing:0.364px;-webkit-text-stroke:0.35px currentColor;">Estado(s)</div>
<div class="t" style="left:322.70px;top:171.46px;font-size:16px;font-weight:400;color:#1f2330;letter-spacing:0.474px;-webkit-text-stroke:0.35px currentColor;">Caneta Azul</div>
<div class="t" style="left:324.70px;top:265.46px;font-size:16px;font-weight:400;color:#2b2e37;letter-spacing:0.431px;-webkit-text-stroke:0.35px currentColor;">Caneta azul esferográfica com material plástico de alta resistência</div>
<div class="t" style="left:322.70px;top:549.46px;font-size:16px;font-weight:400;color:#1f2330;letter-spacing:0.442px;-webkit-text-stroke:0.35px currentColor;">Unidade</div>
<div class="t" style="left:322.60px;top:639.46px;font-size:16px;font-weight:400;color:#1f2330;letter-spacing:-0.598px;-webkit-text-stroke:0.35px currentColor;">10</div>
<div class="t" style="left:826.10px;top:638.76px;font-size:16px;font-weight:400;color:#1f2330;letter-spacing:0.129px;-webkit-text-stroke:0.35px currentColor;">15 dias</div>
<div class="t" style="left:322.60px;top:728.76px;font-size:16px;font-weight:400;color:#1f2330;letter-spacing:0.659px;-webkit-text-stroke:0.35px currentColor;">Todos</div>
<div class="t" style="left:322.40px;top:895.36px;font-size:16px;font-weight:400;color:#1f2330;letter-spacing:0.308px;-webkit-text-stroke:0.35px currentColor;">Paraná; Santa Catarina</div>
<div class="t" style="left:434.00px;top:440.76px;font-size:18px;font-weight:700;color:#1c1f27;letter-spacing:-0.071px;">Produto</div>
<div class="t" style="left:941.00px;top:440.76px;font-size:18px;font-weight:700;color:#1c1f27;letter-spacing:0.008px;">Serviço</div>
<div class="t" style="left:330.50px;top:784.30px;font-size:13px;font-weight:400;color:#c2207c;letter-spacing:-0.831px;-webkit-text-stroke:0.35px currentColor;">PNCP</div>
<div class="t" style="left:400.80px;top:784.30px;font-size:13px;font-weight:400;color:#c2207c;letter-spacing:-0.437px;-webkit-text-stroke:0.35px currentColor;">Tabela CMED</div>
<div class="t" style="left:513.70px;top:784.30px;font-size:13px;font-weight:400;color:#c2207c;letter-spacing:-0.373px;-webkit-text-stroke:0.35px currentColor;">Tabela SINAPI</div>
<div class="t" style="left:630.90px;top:784.30px;font-size:13px;font-weight:400;color:#c2207c;letter-spacing:-0.416px;-webkit-text-stroke:0.35px currentColor;">Tabela SUS</div>
<div class="t" style="left:732.60px;top:784.30px;font-size:13px;font-weight:400;color:#c2207c;letter-spacing:-0.162px;-webkit-text-stroke:0.35px currentColor;">Banco de preços em saúde</div>
<div class="t" style="left:924.50px;top:784.30px;font-size:13px;font-weight:400;color:#c2207c;letter-spacing:-0.068px;-webkit-text-stroke:0.35px currentColor;">Base nacional de notas fiscais eletrônicas</div>
<div class="t" style="left:330.50px;top:814.10px;font-size:13px;font-weight:400;color:#c2207c;letter-spacing:-0.015px;-webkit-text-stroke:0.35px currentColor;">Portais de licitações eletrônicas</div>
<div class="t" style="left:330.40px;top:950.00px;font-size:13px;font-weight:400;color:#2156d4;letter-spacing:-0.537px;-webkit-text-stroke:0.35px currentColor;">Paraná</div>
<div class="t" style="left:406.30px;top:950.00px;font-size:13px;font-weight:400;color:#2156d4;letter-spacing:-0.181px;-webkit-text-stroke:0.35px currentColor;">Santa Catarina</div>
<div class="t" style="left:1339.40px;top:165.15px;font-size:14px;font-weight:400;color:#22252d;letter-spacing:0.415px;-webkit-text-stroke:0.35px currentColor;">Selecione os estados através do mapa:</div>
<div class="t" style="left:1818.20px;top:1035.10px;font-size:15px;font-weight:400;color:#ffffff;letter-spacing:-0.078px;-webkit-text-stroke:0.75px currentColor;">Pesquisar</div>
</body></html>
